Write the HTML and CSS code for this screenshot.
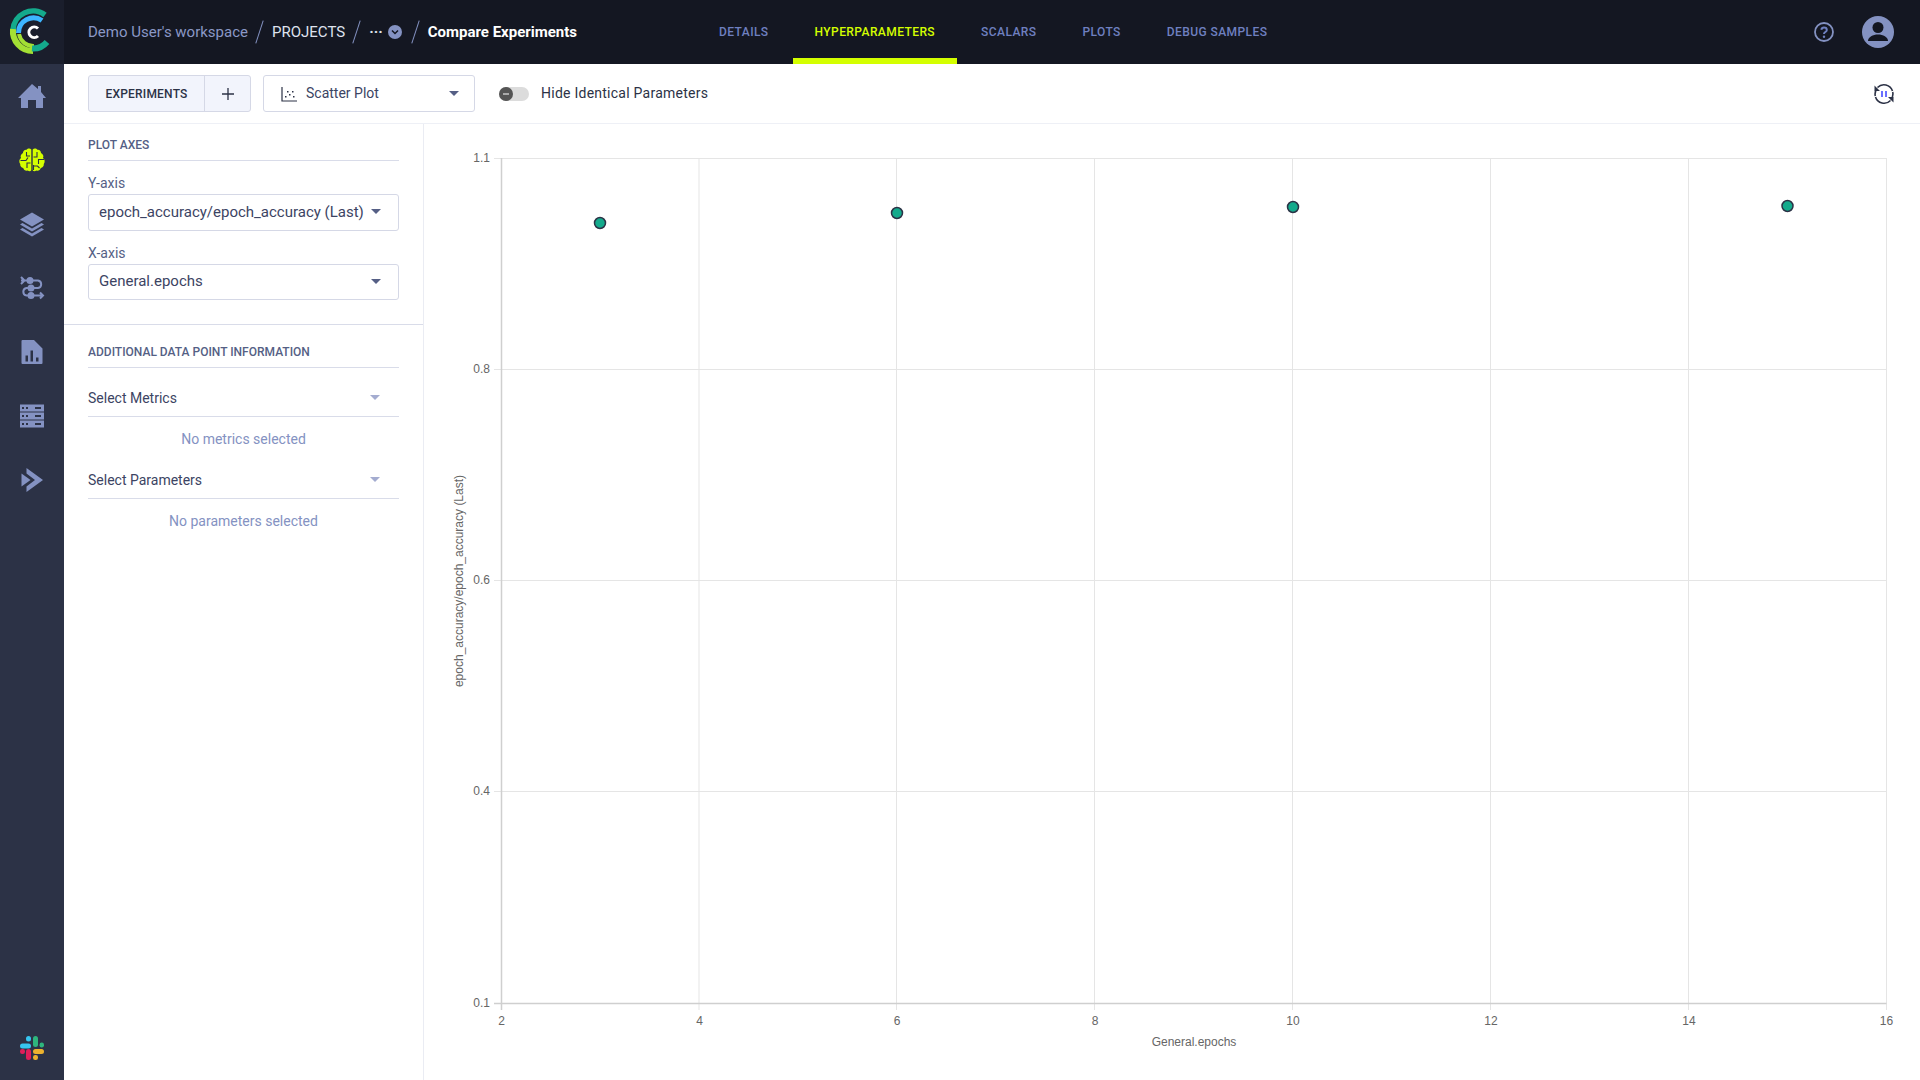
FILE: index.html
```html
<!DOCTYPE html>
<html lang="en">
<head>
<meta charset="utf-8">
<title>Compare Experiments</title>
<link rel="stylesheet" href="styles.css">
</head>
<body>
<div class="app">
  <aside class="sidebar">
    <div class="logo">
      <svg width="64" height="64" viewBox="-1 0 64 64" fill="none">
        <path d="M44 15A20 20 0 0 0 12 30" stroke="#14aa8c" stroke-width="5.5"/>
        <path d="M41 20.500A15 15 0 0 0 17.500 33" stroke="#3db5ff" stroke-width="5"/>
        <path d="M12 29A20 20 0 0 0 32 51" stroke="#a4e034" stroke-width="6"/>
        <path d="M18 34A14.500 14.500 0 0 0 33 46" stroke="#a4e034" stroke-width="4"/>
        <path d="M31 48.500A18 18 0 0 0 46 42" stroke="#14aa8c" stroke-width="6"/>
        <path d="M37 28.500A5.300 5.300 0 1 0 37 36" stroke="#fff" stroke-width="3"/>
      </svg>
    </div>
    <nav class="side-nav">
      <a class="side-item"><svg class="ico" viewBox="0 0 28 28"><path fill="#8492c2" d="M14 2 L20 7V4h3v6l5 6h-3v10h-7v-8h-8v8H3V16H0z"/></svg></a>
      <a class="side-item"><svg class="ico" viewBox="0 0 28 28"><path fill="#d4ff00" d="M13.300 3.500c-1.200-1.300-3.700-1.200-4.700.3C6.500 3.500 5 5 5 7 3 8 2 10 3 12c-2 1.500-2.200 4-.8 6 -.2 2 1 3.500 3 4 .5 2 2.500 3.300 4.500 2.600 1.300 1.100 3 .9 3.600-.3zM14.700 3.500c1.200-1.300 3.700-1.200 4.700.3C21.500 3.500 23 5 23 7c2 1 3 3 2 5 2 1.500 2.200 4 .8 6 .2 2-1 3.500-3 4-.5 2-2.500 3.300-4.500 2.600-1.300 1.100-3 .9-3.600-.3z"/><path fill="none" stroke="#2c3246" stroke-width="1.100" d="M2.500 14.500h5.500l2-3M8.500 6v4h3.500M12.500 17H9v5M19 6v5h-3.500M26 13.500h-5.500v4.500M15.500 20h4l2 2M15.500 24v-5"/></svg></a>
      <a class="side-item"><svg class="ico" viewBox="0 0 28 28"><path fill="#8492c2" d="M14 2.500 26 9.500 14 16.500 2 9.500zM4.500 13 14 18.500 23.500 13 26 14.500 14 21.500 2 14.500zM4.500 18 14 23.500 23.500 18 26 19.500 14 26.500 2 19.500z"/></svg></a>
      <a class="side-item"><svg class="ico" viewBox="0 0 28 28" fill="none" stroke="#8492c2" stroke-width="2"><path d="M3 6.500h8M3 3l3.500 3.500L3 10M11 6.500h9a3.800 3.800 0 0 1 0 7.500H8.500a3.800 3.800 0 0 0 0 7.500H25M22 18.500l3 3-3 3"/><circle cx="12" cy="6.500" r="2.500" fill="#8492c2"/><circle cx="13" cy="14" r="2.500" fill="#8492c2"/><circle cx="13" cy="21.500" r="2.500" fill="#8492c2"/></svg></a>
      <a class="side-item"><svg class="ico" viewBox="0 0 28 28"><path fill="#8492c2" fill-rule="evenodd" d="M4.500 2a1 1 0 0 0-1 1v22a1 1 0 0 0 1 1h19a1 1 0 0 0 1-1V10.500L16 2zM7.500 23.500v-6h2.500v6zM12.500 23.500v-11h2.500v11zM18 23.500v-4h2.500v4z"/></svg></a>
      <a class="side-item"><svg class="ico" viewBox="0 0 28 28"><path fill="#8492c2" fill-rule="evenodd" d="M2 2.500h24v7H2zM4 5v2h2V5zM8 5v2h2V5zM17 5v2h6V5zM2 10.500h24v7H2zM4 13v2h2v-2zM8 13v2h2v-2zM17 13v2h6v-2zM2 18.500h24v7H2zM4 21v2h2v-2zM8 21v2h2v-2zM17 21v2h6v-2z"/></svg></a>
      <a class="side-item"><svg class="ico" viewBox="0 0 28 28"><path fill="#8492c2" d="M8.500 2 25 14 8.500 26V20.500L17 14 8.500 7.500z"/><path fill="#8492c2" d="M3.500 7.500 12.500 14 3.500 20.500z"/></svg></a>
    </nav>
    <div class="slack">
      <svg width="24" height="24" viewBox="0 0 24 24">
        <rect x="0" y="7.500" width="11" height="5" rx="2.500" fill="#36c5f0"/>
        <rect x="6" y="0" width="5" height="5.500" rx="2.500" fill="#36c5f0"/>
        <rect x="13" y="0" width="5" height="11" rx="2.500" fill="#2eb67d"/>
        <rect x="19.500" y="6.500" width="4.500" height="5" rx="2.200" fill="#2eb67d"/>
        <rect x="13" y="13" width="11" height="5" rx="2.500" fill="#ecb22e"/>
        <rect x="13" y="19" width="5" height="5" rx="2.200" fill="#ecb22e"/>
        <rect x="6" y="13" width="5" height="11" rx="2.500" fill="#e01e5a"/>
        <rect x="0" y="13" width="5" height="5" rx="2.200" fill="#e01e5a"/>
      </svg>
    </div>
  </aside>

  <div class="main">
    <header class="topbar">
      <div class="crumbs">
        <span class="crumb muted">Demo User's workspace</span>
        <span class="slash"></span>
        <span class="crumb light">PROJECTS</span>
        <span class="slash"></span>
        <span class="dots">···</span>
        <span class="chev"><svg width="14" height="14" viewBox="0 0 14 14"><circle cx="7" cy="7" r="7" fill="#8492c2"/><path d="M4 5.500 7 8.500 10 5.500" fill="none" stroke="#141722" stroke-width="1.500"/></svg></span>
        <span class="slash"></span>
        <span class="crumb strong">Compare Experiments</span>
      </div>
      <nav class="tabs">
        <a class="tab">DETAILS</a>
        <a class="tab active">HYPERPARAMETERS</a>
        <a class="tab">SCALARS</a>
        <a class="tab">PLOTS</a>
        <a class="tab">DEBUG SAMPLES</a>
      </nav>
      <div class="top-actions">
        <svg width="20" height="20" viewBox="0 0 20 20" fill="none"><circle cx="10" cy="10" r="9" stroke="#8492c2" stroke-width="1.800"/><path d="M7.300 7.800A2.800 2.800 0 0 1 10 5.500c1.700 0 2.800 1.100 2.800 2.400 0 2.200-2.800 2.100-2.800 4.100" stroke="#6f80c0" stroke-width="2"/><circle cx="10" cy="14.700" r="1.200" fill="#6f80c0"/></svg>
        <svg width="32" height="32" viewBox="0 0 32 32"><circle cx="16" cy="16" r="16" fill="#8492c2"/><circle cx="16" cy="11.500" r="5.500" fill="#141722"/><path fill="#141722" d="M6 25c0-4 5-6.500 10-6.500S26 21 26 25z"/></svg>
      </div>
    </header>

    <div class="toolbar">
      <div class="btn-group">
        <span class="btn-label">EXPERIMENTS</span>
        <span class="btn-add"><svg width="12" height="12" viewBox="0 0 12 12"><path d="M6 0v12M0 6h12" stroke="#2c3246" stroke-width="1.300"/></svg></span>
      </div>
      <div class="plot-select">
        <svg class="scatter-ico" width="16" height="16" viewBox="0 0 16 16" fill="none"><path d="M1 1v14h15" stroke="#2c3246" stroke-width="1.200"/><g fill="#2c3246"><rect x="4" y="10" width="1.500" height="1.500"/><rect x="6" y="5" width="1.500" height="1.500"/><rect x="8" y="8" width="1.500" height="1.500"/><rect x="11" y="5" width="1.500" height="1.500"/><rect x="12" y="10" width="1.500" height="1.500"/></g></svg>
        <span class="plot-select-text">Scatter Plot</span>
        <span class="caret dark"></span>
      </div>
      <div class="toggle"><span class="knob"></span></div>
      <span class="toggle-label">Hide Identical Parameters</span>
      <svg class="refresh" width="22" height="22" viewBox="0 0 22 22" fill="none">
        <path d="M4.500 4.500A9 9 0 0 1 19.500 8M17.500 17.500A9 9 0 0 1 2.500 14M2.300 13A9 9 0 0 1 4 5.500M19.700 9A9 9 0 0 1 18 16.500" stroke="#2c3246" stroke-width="1.600"/>
        <path d="M1.500 2.500v5.500h5.500zM20.500 19.500v-5.500h-5.500z" fill="#2c3246"/>
        <path d="M9 8v6M13 8v6" stroke="#6a70ff" stroke-width="2"/>
      </svg>
    </div>

    <div class="content">
      <section class="panel">
        <div class="panel-group first">
          <h2 class="panel-title">PLOT AXES</h2>
          <label class="field-label">Y-axis</label>
          <div class="select"><span>epoch_accuracy/epoch_accuracy (Last)</span><span class="caret dark"></span></div>
          <label class="field-label">X-axis</label>
          <div class="select"><span>General.epochs</span><span class="caret dark"></span></div>
        </div>
        <div class="panel-group">
          <h2 class="panel-title">ADDITIONAL DATA POINT INFORMATION</h2>
          <div class="line-select"><span>Select Metrics</span><span class="caret"></span></div>
          <div class="empty">No metrics selected</div>
          <div class="line-select"><span>Select Parameters</span><span class="caret"></span></div>
          <div class="empty">No parameters selected</div>
        </div>
      </section>

      <section class="chart">
        <svg class="chart-svg" viewBox="424 124 1496 956" width="1496" height="956">
          <g class="grid">
            <path d="M699 158V1010M896.500 158V1010M1094.500 158V1010M1292.500 158V1010M1490.500 158V1010M1688.500 158V1010M1886.500 158V1010"/>
            <path d="M494 158.500H1886.500M494 369.500H1886.500M494 580.500H1886.500M494 791.500H1886.500"/>
          </g>
          <path class="axis" d="M501.500 158V1010M494 1003.500H1886.500"/>
          <g class="tick-y">
            <text x="490" y="162">1.1</text>
            <text x="490" y="373">0.8</text>
            <text x="490" y="584">0.6</text>
            <text x="490" y="795">0.4</text>
            <text x="490" y="1007">0.1</text>
          </g>
          <g class="tick-x">
            <text x="501.500" y="1025">2</text>
            <text x="699.500" y="1025">4</text>
            <text x="897" y="1025">6</text>
            <text x="1095" y="1025">8</text>
            <text x="1293" y="1025">10</text>
            <text x="1491" y="1025">12</text>
            <text x="1689" y="1025">14</text>
            <text x="1886.500" y="1025">16</text>
          </g>
          <text class="title" x="1194" y="1046">General.epochs</text>
          <text class="title" transform="translate(463 581) rotate(-90)">epoch_accuracy/epoch_accuracy (Last)</text>
          <g class="points">
            <circle cx="600" cy="223" r="5.500"/>
            <circle cx="897" cy="213" r="5.500"/>
            <circle cx="1293" cy="207" r="5.500"/>
            <circle cx="1787.500" cy="206" r="5.500"/>
          </g>
        </svg>
      </section>
    </div>
  </div>
</div>
</body>
</html>
```

FILE: styles.css
```css
* { box-sizing: border-box; }
html, body { margin: 0; height: 100%; overflow: hidden; background: #fff; }
body { font-family: Roboto, "Liberation Sans", sans-serif; font-size: 14px; color: #2c3246; }
.app { display: flex; height: 1080px; }

.sidebar { width: 64px; flex: none; background: #2c3246; display: flex; flex-direction: column; }
.logo { height: 64px; background: #1a1e2c; }
.logo svg { display: block; }
.side-nav { display: flex; flex-direction: column; }
.side-item { height: 64px; display: flex; align-items: center; justify-content: center; }
.ico { width: 28px; height: 28px; display: block; }
.slack { margin-top: auto; height: 64px; display: flex; align-items: center; justify-content: center; }

.main { flex: 1; min-width: 0; display: flex; flex-direction: column; }
.topbar { height: 64px; flex: none; background: #141722; display: flex; align-items: center; padding-left: 24px; }
.crumbs { display: flex; align-items: center; width: 609px; flex: none; }
.crumb { font-size: 15px; white-space: nowrap; }
.muted { color: #8b98c6; }
.light { color: #dfe2ee; }
.strong { color: #fff; font-weight: 700; font-size: 15px; }
.slash { width: 1px; height: 24px; background: #8492c2; transform: rotate(18deg); margin: 0 12px 0 11px; }
.dots { color: #dfe2ee; font-size: 15px; font-weight: 700; margin-right: 5px; }
.chev { display: flex; margin-right: 2px; }
.tabs { display: flex; gap: 2px; height: 64px; }
.tab { display: flex; align-items: center; padding: 6px 22px 0; font-size: 12px; font-weight: 500; letter-spacing: .42px; color: #6f80c0; border-bottom: 6px solid transparent; white-space: nowrap; }
.tab.active { color: #d4ff00; border-bottom-color: #d4ff00; }
.top-actions { margin-left: auto; display: flex; align-items: center; gap: 28px; padding-right: 26px; }

.toolbar { height: 60px; flex: none; display: flex; align-items: center; padding: 0 25px 0 24px; border-bottom: 1px solid #eef0f6; }
.btn-group { display: flex; height: 37px; width: 163px; background: #f2f4fc; border: 1px solid #d5d8e6; border-radius: 3px; margin-right: 12px; }
.btn-label { width: 116px; display: flex; align-items: center; justify-content: center; font-size: 12px; font-weight: 500; letter-spacing: .2px; color: #2c3246; border-right: 1px solid #d5d8e6; }
.btn-add { flex: 1; display: flex; align-items: center; justify-content: center; }
.plot-select { width: 212px; height: 37px; display: flex; align-items: center; padding: 0 15px 0 17px; border: 1px solid #d5d8e6; border-radius: 3px; }
.scatter-ico { margin-right: 9px; }
.plot-select-text { flex: 1; color: #3c4463; padding-bottom: 2px; }
.caret { width: 0; height: 0; border-left: 5px solid transparent; border-right: 5px solid transparent; border-top: 5px solid #a4acd0; flex: none; }
.caret.dark { border-top-color: #555f85; }
.toggle { width: 30px; height: 14px; border-radius: 7px; background: #dcdcdc; margin: 0 12px 0 24px; position: relative; }
.knob { position: absolute; left: 0; top: 0; width: 14px; height: 14px; border-radius: 50%; background: #555; }
.knob::after { content: ""; position: absolute; left: 4px; top: 6px; width: 6px; height: 2px; background: #aaa; }
.toggle-label { color: #2c3246; letter-spacing: .25px; padding-bottom: 1px; }
.refresh { margin-left: auto; }

.content { flex: 1; display: flex; min-height: 0; }
.panel { width: 360px; flex: none; border-right: 1px solid #eaecf3; }
.panel-group { padding: 0 24px; }
.panel-group.first { height: 201px; border-bottom: 1px solid #d9dce9; padding-top: 13px; }
.panel-group:not(.first) { padding-top: 19px; }
.panel-title { margin: 0; font-size: 12px; line-height: 16px; font-weight: 500; color: #555f85; padding-bottom: 7px; border-bottom: 1px solid #d9dce9; }
.field-label { display: block; color: #555f85; line-height: 16px; margin-top: 14px; margin-bottom: 3px; }
.select { height: 37px; display: flex; align-items: center; justify-content: space-between; padding: 0 17px 2px 10px; border: 1px solid #d5d8e6; border-radius: 3px; font-size: 15px; color: #3c4463; white-space: nowrap; }
.select + .field-label + .select { height: 36px; }
.line-select { height: 49px; padding: 12px 19px 1px 0; display: flex; align-items: center; justify-content: space-between; border-bottom: 1px solid #d9dce9; color: #3c4463; }
.empty { height: 44px; display: flex; align-items: center; justify-content: center; color: #8492c2; }
.line-select + .empty + .line-select { height: 38px; padding: 0 19px 0 0; }

.chart { flex: 1; min-width: 0; }
.chart-svg { display: block; font-family: "Liberation Sans", Arial, sans-serif; font-size: 12px; fill: #666; }
.grid path { stroke: #e5e5e5; stroke-width: 1; fill: none; }
.axis { stroke: #cfcfcf; stroke-width: 1.500; fill: none; }
.tick-y text { text-anchor: end; }
.tick-x text { text-anchor: middle; }
.title { text-anchor: middle; }
.points circle { fill: #14aa8c; stroke: #2c3246; stroke-width: 1.500; }
```
